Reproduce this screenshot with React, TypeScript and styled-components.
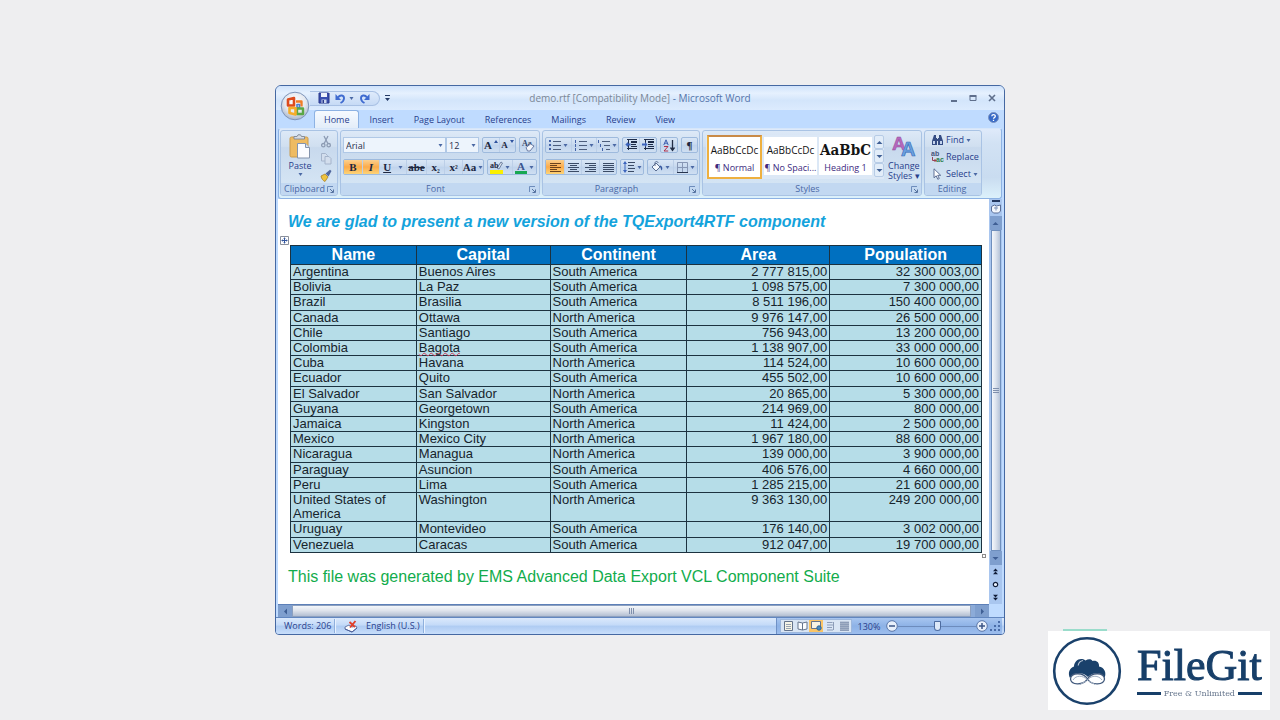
import React from 'react';
import styled, { createGlobalStyle, css } from 'styled-components';

const GlobalStyle = createGlobalStyle`
  * { box-sizing: border-box; }
  body { margin: 0; background: #eeeef0; font-family: "Open Sans", "Noto Sans", sans-serif; font-size: 9px; color: #28408c; }
  button, input, select { font: inherit; color: inherit; margin: 0; }
  button { padding: 0; border: 0; background: none; cursor: pointer; }
  h1, p { margin: 0; }
  svg { display: block; flex: none; }
`;

const Page = styled.main`
  min-height: 100vh;
  display: flex;
  align-items: center;
  justify-content: center;
  padding: 24px;
`;

const Window = styled.section`
  position: relative;
  width: 100%;
  max-width: 730px;
  border: 1px solid #4568a2;
  border-radius: 6px 6px 4px 4px;
  background: #bfdbff;
  overflow: hidden;
`;

/* ---------- title bar ---------- */

const TitleBar = styled.header`
  display: grid;
  grid-template-columns: 1fr auto 1fr;
  align-items: center;
  height: 24px;
  padding: 0 6px;
  background: linear-gradient(#cfe2fb, #e6f1fe 30%, #d3e5fb 60%, #dcebfe);
`;

const QuickAccess = styled.div`
  display: flex;
  align-items: center;
  padding-left: 28px;
`;

const QuickPill = styled.div`
  display: flex;
  align-items: center;
  gap: 3px;
  width: 70px;
  height: 15px;
  padding-left: 7px;
  border: 1px solid #a9c1e4;
  border-left: 0;
  border-radius: 0 8px 8px 0;
  background: linear-gradient(#dfebfb, #c6daf5);
`;

const Title = styled.h1`
  font-size: 10px;
  line-height: 14px;
  font-weight: 400;
  color: #7b8796;
  white-space: nowrap;
  span { color: #5474aa; }
`;

const WindowControls = styled.div`
  display: flex;
  justify-content: flex-end;
  gap: 7px;
`;

const IconButton = styled.button`
  display: flex;
  align-items: center;
  justify-content: center;
  flex: none;
  width: ${(p: { $w?: number }) => (p.$w || 12) + 'px'};
  height: 14px;
`;

const OfficeButton = styled.button`
  position: absolute;
  left: 4px;
  top: 5px;
  z-index: 2;
  width: 30px;
  height: 30px;
`;

/* ---------- tabs ---------- */

const TabRow = styled.nav`
  display: flex;
  align-items: stretch;
  height: 18px;
  padding: 0 4px 0 38px;
`;

const Tab = styled.button<{ $active?: boolean }>`
  padding: 0 9px;
  line-height: 18px;
  border: 1px solid transparent;
  border-bottom: 0;
  white-space: nowrap;
  ${(p) => p.$active && css`
    border-color: #8db2e3;
    border-radius: 3px 3px 0 0;
    background: linear-gradient(#f6faff, #e3edf9);
  `}
`;

const Spacer = styled.div`
  flex: 1;
`;

/* ---------- ribbon ---------- */

const Ribbon = styled.div`
  display: flex;
  gap: 2px;
  margin: 0 2px;
  padding: 1px 1px 2px;
  border: 1px solid #8db2e3;
  border-top-color: #d6e6fa;
  border-radius: 3px;
  background: linear-gradient(#dfeafa, #d2e2f4 20%, #c9dcf0 70%, #dcf1fb);
`;

const Group = styled.section<{ $w: number }>`
  display: flex;
  flex-direction: column;
  flex: none;
  width: ${(p) => p.$w}px;
  height: 66px;
  border: 1px solid #a9c3e4;
  border-radius: 3px;
  background: linear-gradient(#dde9f7, #d0dff0 24%, #c8d9ed 26%, #d8e8f6);
  overflow: hidden;
`;

const GroupBody = styled.div`
  flex: 1;
  display: flex;
  flex-direction: column;
  gap: 6px;
  padding: 6px 1px 0 2px;
`;

const GroupLabel = styled.footer`
  display: flex;
  align-items: center;
  justify-content: center;
  height: 12px;
  padding: 0 3px 0 1px;
  color: #4a68a6;
  line-height: 12px;
  background: #c2d8f1;
  span { flex: 1; text-align: center; }
`;

const Row = styled.div<{ $gap?: number }>`
  display: flex;
  gap: ${(p) => p.$gap ?? 3}px;
`;

const ToolSet = styled.div`
  display: flex;
  height: 16px;
  border: 1px solid #9ebadd;
  border-radius: 2px;
  background: linear-gradient(#d9e6f6, #c9daef 45%, #bfd3ec 50%, #cfdff2);
`;

const Tool = styled.button<{ $w: number; $on?: boolean }>`
  display: flex;
  align-items: center;
  justify-content: center;
  gap: 2px;
  width: ${(p) => p.$w}px;
  height: 14px;
  color: #1c2740;
  font: bold 11px/14px "Liberation Serif", serif;
  & + & { border-left: 1px solid #bccfe8; }
  ${(p) => p.$on && css`
    background: linear-gradient(#fbd08e, #fbab4b 50%, #fdd478);
  `}
`;

const SelectBox = styled.label<{ $w: number }>`
  position: relative;
  width: ${(p) => p.$w}px;
  height: 16px;
  select {
    appearance: none;
    width: 100%;
    height: 100%;
    padding: 0 2px;
    border: 1px solid #b0c8e6;
    border-radius: 0;
    background: #edf4fc;
    color: #28304c;
  }
  svg { position: absolute; right: 3px; top: 7px; pointer-events: none; }
`;

const ClipBody = styled.div`
  flex: 1;
  display: flex;
  justify-content: space-between;
  padding: 3px 5px 0 3px;
`;

const BigButton = styled.button`
  display: flex;
  flex-direction: column;
  align-items: center;
  width: 32px;
  line-height: 10px;
  gap: 2px;
`;

const SmallColumn = styled.div`
  display: flex;
  flex-direction: column;
  gap: 3px;
`;

const StylesBody = styled.div`
  flex: 1;
  display: flex;
  align-items: flex-start;
  gap: 4px;
  padding: 4px 2px 0 3px;
`;

const Gallery = styled.div`
  display: flex;
  gap: 2px;
  height: 44px;
  padding-left: 1px;
  background: #dce8f6;
`;

const StyleCard = styled.button<{ $on?: boolean }>`
  display: flex;
  flex-direction: column;
  justify-content: space-between;
  width: ${(p) => (p.$on ? 55 : 53)}px;
  height: ${(p) => (p.$on ? 44 : 38)}px;
  margin-top: ${(p) => (p.$on ? 0 : 2)}px;
  padding: 4px 0 1px;
  overflow: hidden;
  background: #ffffff;
  color: #3d2a80;
  line-height: 12px;
  white-space: nowrap;
  ${(p) => p.$on && css`
    padding: 4px 0 3px;
    border: 2px solid #eeb040;
    border-top-color: #c98a48;
  `}
  span { width: 100%; }
`;

const Sample = styled.span<{ $serif?: boolean }>`
  height: 18px;
  text-align: center;
  font: ${(p) => (p.$serif ? 'bold 15px/18px "DejaVu Serif Condensed", "DejaVu Serif", serif' : '10px/18px "Open Sans", sans-serif')};
  color: #141414;
`;

const GalleryArrows = styled.div`
  display: flex;
  flex-direction: column;
  button { height: 14px; border: 1px solid #b7cce6; border-radius: 2px; background: #e2edf9; }
`;

const EditBody = styled.div`
  flex: 1;
  display: flex;
  flex-direction: column;
  gap: 5px;
  padding: 3px 0 0 6px;
`;

const EditButton = styled.button`
  display: flex;
  align-items: center;
  gap: 2px;
  height: 12px;
  line-height: 12px;
`;

/* ---------- document ---------- */

const Workspace = styled.div`
  display: flex;
  margin: 0 2px;
`;

const Paper = styled.article`
  flex: 1;
  min-width: 0;
  min-height: 405px;
  padding: 13px 7px 0 10px;
  background: #ffffff;
  font-family: "Liberation Sans", Arial, sans-serif;
`;

const Headline = styled.p`
  font-size: 16px;
  line-height: 20px;
  font-weight: 700;
  font-style: italic;
  color: #14a3dc;
`;

const TableFrame = styled.div`
  position: relative;
  margin: 13px 0 0 2px;
`;

const MoveHandle = styled.button`
  position: absolute;
  left: -10px;
  top: -9px;
  width: 9px;
  height: 9px;
`;

const ResizeHandle = styled.span`
  position: absolute;
  right: -4px;
  bottom: -5px;
  width: 4px;
  height: 4px;
  border: 1px solid #8c8c8c;
  background: #ffffff;
`;

const DataTable = styled.table`
  width: 100%;
  height: 308px;
  table-layout: fixed;
  border-collapse: collapse;
  background: #b6dde8;
  color: #17242c;
  font-size: 13px;
  line-height: 14px;
  th, td { border: 1px solid #1c3240; padding: 0 2px; vertical-align: top; }
  th { background: #0070c0; color: #ffffff; font-size: 16px; line-height: 18px; }
  td { text-align: left; }
`;

const NumberCell = styled.td`
  && { text-align: right; }
`;

const Misspelt = styled.span`
  text-decoration: underline wavy #d0405c 1px;
  text-decoration-skip-ink: none;
  text-underline-offset: 0;
`;

const Footnote = styled.p`
  margin-top: 14px;
  font-size: 16px;
  line-height: 20px;
  color: #12ac4c;
`;

const VScroll = styled.aside`
  display: flex;
  flex-direction: column;
  align-items: center;
  width: 13px;
  background: #a9c6ef;
`;

const ScrollButton = styled.button`
  display: flex;
  align-items: center;
  justify-content: center;
  flex: none;
  width: ${(p: { $wide?: boolean }) => (p.$wide ? 14 : 12)}px;
  height: ${(p: { $wide?: boolean }) => (p.$wide ? 12 : 14)}px;
  background: #7f9fce;
`;

const VThumb = styled.div`
  display: flex;
  align-items: center;
  justify-content: center;
  flex: 1;
  width: 10px;
  border: 1px solid #6f8fbd;
  background: linear-gradient(90deg, #f4f7fb, #dde4ee 45%, #b5c3d8);
`;

const PageJump = styled.div`
  display: flex;
  flex-direction: column;
  button { height: 13px; }
`;

const HScroll = styled.div`
  display: flex;
  height: 13px;
  margin: 0 15px 0 2px;
  border-top: 1px solid #5d80b8;
  background: #8cabd8;
`;

const HThumb = styled.div`
  display: flex;
  align-items: center;
  justify-content: center;
  flex: 1;
  margin-right: 4px;
  border: 1px solid #8ca0bf;
  background: linear-gradient(#f4f7fb, #dfe4ec 45%, #b3bfd2);
`;

/* ---------- status bar ---------- */

const StatusBar = styled.footer`
  display: flex;
  align-items: center;
  height: 17px;
  padding: 0 2px 0 8px;
  border-top: 1px solid #6287c0;
  background: linear-gradient(#dbe9fc, #c3daf8 45%, #aecbf2 50%, #c8defb);
`;

const StatusItem = styled.span<{ $w: number }>`
  width: ${(p) => p.$w}px;
  line-height: 14px;
  white-space: nowrap;
`;

const Divider = styled.i`
  width: 2px;
  height: 14px;
  border-left: 1px solid #8fb0dd;
  border-right: 1px solid #e8f2ff;
`;

const StatusRight = styled.div`
  display: flex;
  align-items: center;
  height: 16px;
  padding-left: 3px;
  border-left: 1px solid #6f91c6;
  background: linear-gradient(#a8c6f0, #8db2e6 50%, #9dbeee);
`;

const ViewButtons = styled.div`
  display: flex;
  border: 1px solid #9db7dc;
  background: #d9e5f4;
`;

const ViewButton = styled.button<{ $on?: boolean }>`
  display: flex;
  align-items: center;
  justify-content: center;
  width: 14px;
  height: 12px;
  background: ${(p) => (p.$on ? '#fbc566' : 'transparent')};
`;

const ZoomRange = styled.input`
  appearance: none;
  width: 78px;
  height: 13px;
  background: linear-gradient(#6d8cbd, #6d8cbd) center / 100% 1px no-repeat;
  &::-webkit-slider-thumb {
    appearance: none;
    width: 7px;
    height: 10px;
    border: 1px solid #4d6ca0;
    border-radius: 1px 1px 4px 4px;
    background: #dce8f8;
  }
`;

const ZoomText = styled.span`
  width: 34px;
  text-align: center;
`;

/* ---------- brand badge ---------- */

const Brand = styled.a`
  position: fixed;
  right: 10px;
  bottom: 10px;
  display: flex;
  align-items: center;
  gap: 15px;
  width: 222px;
  height: 79px;
  padding-left: 4px;
  background: #ffffff;
  color: #173f69;
  text-decoration: none;
  &::before {
    content: "";
    position: absolute;
    left: 15px;
    top: -2px;
    width: 44px;
    height: 2px;
    background: #9adccb;
  }
`;

const BrandText = styled.div`
  display: flex;
  flex-direction: column;
  font-family: "Liberation Serif", serif;
`;

const BrandName = styled.strong`
  font-size: 44px;
  line-height: 46px;
  font-weight: 400;
  -webkit-text-stroke: 1px #173f69;
`;

const BrandLine = styled.span`
  display: flex;
  align-items: center;
  gap: 3px;
  font: 8px/10px "DejaVu Serif", serif;
  color: #65758c;
  white-space: nowrap;
  &::before, &::after { content: ""; flex: 1; height: 3px; background: #173f69; }
`;

/* ---------- icons ---------- */

const Caret = ({ color = '#4a68a4' }: { color?: string }) => (
  <svg width="5" height="3" viewBox="0 0 5 3"><path d="M0.5 0h4L2.5 3z" fill={color} /></svg>
);

const Chevron = ({ turn = 0 }: { turn?: number }) => (
  <svg width="7" height="7" viewBox="0 0 7 7"><path d="M0.5 5h6L3.5 2z" fill="#3f5f94" transform={`rotate(${turn} 3.5 3.5)`} /></svg>
);

const Launcher = () => (
  <svg width="7" height="7" viewBox="0 0 7 7" fill="none" stroke="#6e8dbc"><path d="M.5 6V.5H6" /><path d="M3 3l3 3M6.5 3.5v3h-3" stroke="#55729f" /></svg>
);

const OfficeOrb = () => (
  <svg width="30" height="30" viewBox="0 0 30 30">
    <defs>
      <radialGradient id="orb" cx=".5" cy=".35" r=".65">
        <stop offset="0" stopColor="#ffffff" /><stop offset=".6" stopColor="#e3e7ee" /><stop offset="1" stopColor="#a9b6cb" />
      </radialGradient>
    </defs>
    <circle cx="15" cy="15" r="13.8" fill="url(#orb)" stroke="#7c93b8" />
    <g fill="none" strokeLinejoin="round">
      <path d="M8 8.500l6-1.500v7.500H8z" stroke="#dd4b1c" strokeWidth="2.600" />
      <path d="M16 10.500h5.500v5" stroke="#f07d26" strokeWidth="2.400" />
      <path d="M17 13.500h2.500v3h-2.500z" stroke="#4b7fd0" strokeWidth="1.600" />
      <path d="M17 17.500h6v5.500h-6z" stroke="#5aa746" strokeWidth="2.400" />
      <path d="M9.500 17v5l6 1.500V17z" stroke="#f5ac2a" strokeWidth="2.600" />
    </g>
  </svg>
);

const SaveIcon = () => (
  <svg width="12" height="12" viewBox="0 0 12 12"><path d="M1 1h9.500l.5.500V11H1z" fill="#3a4fae" stroke="#27378a" /><path d="M3 1h6v4H3z" fill="#eef3fb" /><path d="M3.500 7.500h5V11h-5z" fill="#c9d5ec" /><path d="M4.500 8h1.500v3H4.500z" fill="#27378a" /></svg>
);

const UndoIcon = ({ flip = false }: { flip?: boolean }) => (
  <svg width="11" height="11" viewBox="0 0 11 11"><g transform={flip ? 'matrix(-1 0 0 1 11 0)' : undefined}>
    <path d="M3 4.500C5 1.500 9.200 2 9 5.500 8.900 7.500 7.500 9 5.500 10" fill="none" stroke="#3f6bd0" strokeWidth="1.900" /><path d="M.5 1v6h5.500z" fill="#3f6bd0" /></g></svg>
);

const PasteIcon = () => (
  <svg width="22" height="25" viewBox="0 0 22 25">
    <rect x="1" y="3" width="18" height="20" rx="1.500" fill="#eebb62" stroke="#c99a4c" />
    <path d="M5 5V2.500h3L9 .8h2.500l1 1.700h3V5z" fill="#d7dbe2" stroke="#7c8796" strokeWidth=".9" />
    <path d="M8.500 9.500h8l4 4v10.500h-12z" fill="#fbfcff" stroke="#8494ad" />
    <path d="M16.500 9.500v4h4" fill="#d8e0ee" stroke="#8494ad" />
  </svg>
);

const CutIcon = () => (
  <svg width="12" height="13" viewBox="0 0 12 13" fill="none" stroke="#8c9bb3" strokeWidth="1.300"><path d="M4 1l3.800 7.500M8 1L4.200 8.500" /><circle cx="3.300" cy="10.200" r="1.700" /><circle cx="8.700" cy="10.200" r="1.700" /></svg>
);
const CopyIcon = () => (
  <svg width="12" height="13" viewBox="0 0 12 13" fill="#d3deed" stroke="#a5b4cb"><path d="M1.500 1.500h4l2 2V9h-6z" /><path d="M5 4.500h4l2 2V12H5z" /></svg>
);
const BrushIcon = () => (
  <svg width="12" height="13" viewBox="0 0 12 13"><path d="M1 7l4-2 3 3-3 4.500C3 11.500 1.500 10 1 7z" fill="#efc33c" stroke="#a9822a" strokeWidth=".8" /><path d="M5.500 4.500l3 3L11.500 2 10 .8z" fill="#50679e" /></svg>
);

const bars = (color: string, widths: number[], x: number[]) =>
  widths.map((w, i) => <rect key={i} x={x[i]} y={1 + i * 2} width={w} height="1" fill={color} />);

const AlignIcon = ({ kind }: { kind: 'left' | 'center' | 'right' | 'full' }) => {
  const w = kind === 'full' ? [11, 11, 11, 11, 11] : [11, 7, 11, 7, 11];
  const off = kind === 'center' ? 2 : kind === 'right' ? 4 : 0;
  return <svg width="11" height="11" viewBox="0 0 11 11">{bars(kind === 'left' ? '#6b431d' : '#3b4b66', w, [0, off, 0, off, 0])}</svg>;
};

const ListIcon = ({ kind }: { kind: 'dots' | 'numbers' | 'levels' }) => (
  <svg width="12" height="12" viewBox="0 0 12 12" fill="#4463a8">
    {[1, 5, 9].map((y, i) => {
      const x = kind === 'levels' ? i * 2 : 0;
      return <g key={y}><rect x={x} y={y} width={kind === 'dots' ? 2 : 1} height={kind === 'dots' ? 2 : 3} /><rect x={x + 4} y={y + 1} width={8 - x} height="1" fill="#4c5d7c" /></g>;
    })}
  </svg>
);

const IndentIcon = ({ turn = false }: { turn?: boolean }) => (
  <svg width="12" height="12" viewBox="0 0 12 12">
    <g fill="#1e2c48"><rect x="2" y="0" width="10" height="1" /><rect x="6" y="2" width="6" height="2" /><rect x="6" y="5" width="5" height="1" /><rect x="6" y="7" width="6" height="1" /><rect x="2" y="9" width="10" height="1" /><rect x="3" y="1" width="1" height="10" /></g>
    <path d={turn ? 'M0 4.500h3V3l2.500 2.500L3 8V6.500H0z' : 'M5.500 4.500H3V3L.3 5.500 3 8V6.500h2.500z'} fill="#3c64bd" />
  </svg>
);

const SortIcon = () => (
  <svg width="13" height="13" viewBox="0 0 13 13" fill="none"><path d="M.8 6L3 .8 5.200 6M1.600 4.200h2.800" stroke="#3a5cae" /><path d="M1 7.500h4L1 12h4.200" stroke="#b0304a" /><path d="M9.500 1v10M7.500 8.500l2 2.800 2-2.800" stroke="#222d45" strokeWidth="1.300" /></svg>
);

const SpacingIcon = () => (
  <svg width="12" height="12" viewBox="0 0 12 12"><path d="M2 0L4 3H0zM2 12l2-3H0z" fill="#3c64bd" /><path d="M2 3v6" stroke="#3c64bd" /><g fill="#3b4b66"><rect x="5" y="1" width="7" height="1" /><rect x="5" y="4" width="6" height="1" /><rect x="5" y="7" width="7" height="1" /><rect x="5" y="10" width="6" height="1" /></g></svg>
);

const BucketIcon = () => (
  <svg width="12" height="12" viewBox="0 0 12 12"><path d="M1 6l4-4 4 4-4 4z" fill="#f4f8fd" stroke="#5a6d91" /><path d="M4 5V2c0-2 3-2 3 0" fill="none" stroke="#5a6d91" /><path d="M9 4.500c2.500.5 2.800 3 1.800 5C9.500 8 10 6.500 8.500 5.500z" fill="#34569e" /></svg>
);

const BorderIcon = () => (
  <svg width="11" height="11" viewBox="0 0 11 11" fill="none"><path d="M.5 10V.5h10V10M5.500 1v9M1 5.500h9" stroke="#8797b5" /><path d="M0 10.500h11" stroke="#26344e" /></svg>
);

const HighlightIcon = () => (
  <svg width="13" height="13" viewBox="0 0 13 13"><path d="M7 7l4-6 1.500 1L9 8z" fill="#dfe6f0" stroke="#56688c" strokeWidth=".8" /><rect x="0" y="9" width="13" height="4" fill="#fbf000" /><text x="0" y="7" fontSize="8" fontWeight="700" fill="#1c2740" fontFamily="Liberation Serif, serif">ab</text></svg>
);

const FontColorIcon = () => (
  <svg width="12" height="13" viewBox="0 0 12 13"><text x="6" y="9" textAnchor="middle" fontSize="11" fontWeight="700" fill="#3a5590" fontFamily="Liberation Serif, serif">A</text><rect y="10" width="12" height="3" fill="#17a852" /></svg>
);

const SizeMark = ({ down = false }: { down?: boolean }) => (
  <svg width="4" height="10" viewBox="0 0 4 10"><path d={down ? 'M0 0h4L2 3z' : 'M0 3h4L2 0z'} fill="#2f539f" /></svg>
);

const SmallCap = styled.span`
  font-size: 9px;
`;

const ClearIcon = () => (
  <svg width="14" height="13" viewBox="0 0 14 13"><text x="1" y="7" fontSize="8" fontWeight="700" fill="#34456a" fontFamily="Liberation Serif, serif">Aa</text><path d="M5 8.500L9.500 5l3.500 2-4 5H6.500z" fill="#f4f7fc" stroke="#6a7ba3" /></svg>
);

const StylesIcon = () => (
  <svg width="26" height="24" viewBox="0 0 26 24" overflow="visible" fontFamily="Liberation Sans, sans-serif" fontWeight="700"><text x="1" y="15" fontSize="19" fill="#b768bd" stroke="#8d4c9c" strokeWidth=".5">A</text><text x="10" y="21" fontSize="20" fill="#6ba2e0" stroke="#3b6db8" strokeWidth=".7">A</text></svg>
);

const FindIcon = () => (
  <svg width="13" height="11" viewBox="0 0 13 11" fill="#344c84"><path d="M3 0h2v3h1v7H1V6z" /><path d="M8 0h2l2 6v4H7V3h1z" /><path d="M5 4h3v2H5z" /><path d="M2 6h2v3H2zM9 6h2v3H9z" fill="#c4d4ee" /></svg>
);
const ReplaceIcon = () => (
  <svg width="13" height="12" viewBox="0 0 13 12" fontFamily="Liberation Sans, sans-serif" fontSize="7" fontWeight="700"><text x="0" y="5" fill="#46557c">ab</text><text x="5" y="11" fill="#2b7c4c">ac</text><path d="M1.500 6v3.500H5M3.500 8L5 9.500 3.500 11" fill="none" stroke="#9b4053" /></svg>
);
const SelectIcon = () => (
  <svg width="13" height="12" viewBox="0 0 13 12"><path d="M3 .8v9l2.200-2 1.600 3.500 1.500-.8-1.600-3.200h3z" fill="#fff" stroke="#50628b" strokeWidth=".9" /></svg>
);

const HelpIcon = () => (
  <svg width="11" height="11" viewBox="0 0 11 11"><circle cx="5.500" cy="5.500" r="5" fill="#3569c8" stroke="#7c93c0" /><path d="M3.800 4.300C3.800 2 7.300 2 7.300 4.200 7.300 5.500 5.600 5.400 5.500 6.800M5.500 7.800v1.200" fill="none" stroke="#fff" strokeWidth="1.300" /></svg>
);

const ProofIcon = () => (
  <svg width="14" height="13" viewBox="0 0 14 13"><path d="M1 7l4-2 3 2 4-1 1 2-5 4L1 9z" fill="#fbfcff" stroke="#6577a5" /><path d="M1 9l7 3 5-4" fill="none" stroke="#4b609a" /><path d="M5.500 2l5.500 5M11.500 1L6 7.500" stroke="#e0402c" strokeWidth="1.900" /></svg>
);

const ViewIcon = ({ kind }: { kind: number }) => (
  <svg width="11" height="10" viewBox="0 0 11 10" fill="none" stroke={kind > 2 ? '#8d9db8' : '#65748c'}>
    {kind === 0 && <><path d="M1.500.5h8v9h-8z" fill="#f6f4e6" /><path d="M3 3.500h5M3 5.500h5M3 7.500h5" stroke="#9aa4b2" /></>}
    {kind === 1 && <path d="M5.500 2v7M5.500 2L1 1v7l4.500 1L10 8V1z" fill="#fafcff" />}
    {kind === 2 && <><path d="M.5.500h9v7h-9z" fill="#f8f3e2" /><circle cx="8" cy="7" r="2.200" fill="#4a8bbd" stroke="#2f6596" /></>}
    {kind === 3 && <path d="M2 1.500h5.500M2 4h6M2 6.500h5M2 9h6M8.500 1v8" />}
    {kind === 4 && <><path d="M1 .5h9v9H1z" fill="#a3b0c6" stroke="none" /><path d="M1 1.500h9M1 3.500h9M1 5.500h9M1 7.500h9M1 9.500h9" /></>}
  </svg>
);

const ZoomSign = ({ plus = false }: { plus?: boolean }) => (
  <svg width="12" height="12" viewBox="0 0 12 12" fill="none"><circle cx="6" cy="6" r="5.300" fill="#e8f0fb" stroke="#5b77a8" /><path d={plus ? 'M3 6h6M6 3v6' : 'M3 6h6'} stroke="#3d5686" strokeWidth="1.500" /></svg>
);

const PageJumpIcon = ({ kind }: { kind: 'up' | 'dot' | 'down' }) => (
  <svg width="7" height="7" viewBox="0 0 7 7">
    {kind === 'dot'
      ? <circle cx="3.500" cy="3.500" r="2.200" fill="#e9f1fc" stroke="#101c38" strokeWidth="1.200" />
      : <path d="M1 3.200h5L3.500.5zM1 6.200h5L3.500 3.500z" fill="#101c38" transform={kind === 'down' ? 'rotate(180 3.500 3.500)' : undefined} />}
  </svg>
);

const CloudLogo = () => (
  <svg width="70" height="70" viewBox="0 0 70 70" fill="none">
    <circle cx="35" cy="35" r="32.800" fill="#fff" stroke="#1a416b" strokeWidth="2.600" />
    <path d="M18 42c-2.500-5-.5-10 4-11.500C22 25 28 20.500 33.500 24.500c3-2 6-1.500 7 .5 4-1 7 1.500 6.500 5.500 5 .5 8 6 5.500 11.500-2-5-10-7-16.500-1-6-6-15-4-18 1z" fill="#1a416b" />
    <path d="M31 24.500c-2.500.5-4.500 2.500-4.800 5" stroke="#b8c5d5" strokeWidth="1.200" />
    <path d="M35.500 43c-4-7-16.500-7-17 0 .5 6 12 7 17 0 4.500 7 16.500 6 17 0-.5-7-13-7-17 0z" fill="#fff" stroke="#41597c" strokeWidth="1.300" />
    <path d="M21 44c3-5 10-5 14.500 0 4-5 11-5 14.500 0M28 48.500l6-3.500M43 48.500L37 45" stroke="#a3b0c3" />
  </svg>
);

/* ---------- data ---------- */

const COLUMNS: { name: string; share: number }[] = [
  { name: 'Name', share: 126 },
  { name: 'Capital', share: 134 },
  { name: 'Continent', share: 137 },
  { name: 'Area', share: 143 },
  { name: 'Population', share: 152 },
];
const TOTAL_SHARE = COLUMNS.reduce((sum, c) => sum + c.share, 0);

const ROWS = [
  ['Argentina', 'Buenos Aires', 'South America', '2 777 815,00', '32 300 003,00'],
  ['Bolivia', 'La Paz', 'South America', '1 098 575,00', '7 300 000,00'],
  ['Brazil', 'Brasilia', 'South America', '8 511 196,00', '150 400 000,00'],
  ['Canada', 'Ottawa', 'North America', '9 976 147,00', '26 500 000,00'],
  ['Chile', 'Santiago', 'South America', '756 943,00', '13 200 000,00'],
  ['Colombia', 'Bagota', 'South America', '1 138 907,00', '33 000 000,00'],
  ['Cuba', 'Havana', 'North America', '114 524,00', '10 600 000,00'],
  ['Ecuador', 'Quito', 'South America', '455 502,00', '10 600 000,00'],
  ['El Salvador', 'San Salvador', 'North America', '20 865,00', '5 300 000,00'],
  ['Guyana', 'Georgetown', 'South America', '214 969,00', '800 000,00'],
  ['Jamaica', 'Kingston', 'North America', '11 424,00', '2 500 000,00'],
  ['Mexico', 'Mexico City', 'North America', '1 967 180,00', '88 600 000,00'],
  ['Nicaragua', 'Managua', 'North America', '139 000,00', '3 900 000,00'],
  ['Paraguay', 'Asuncion', 'South America', '406 576,00', '4 660 000,00'],
  ['Peru', 'Lima', 'South America', '1 285 215,00', '21 600 000,00'],
  ['United States of America', 'Washington', 'North America', '9 363 130,00', '249 200 000,00'],
  ['Uruguay', 'Montevideo', 'South America', '176 140,00', '3 002 000,00'],
  ['Venezuela', 'Caracas', 'South America', '912 047,00', '19 700 000,00'],
];

const TABS = ['Home', 'Insert', 'Page Layout', 'References', 'Mailings', 'Review', 'View'];

/* ---------- ribbon groups ---------- */

const Label = ({ text, launcher = true }: { text: string; launcher?: boolean }) => (
  <GroupLabel><span>{text}</span>{launcher && <Launcher />}</GroupLabel>
);

const ClipboardGroup = () => (
  <Group $w={58}>
    <ClipBody>
      <BigButton><PasteIcon /><span>Paste</span><Caret /></BigButton>
      <SmallColumn>
        <IconButton aria-label="Cut"><CutIcon /></IconButton>
        <IconButton aria-label="Copy"><CopyIcon /></IconButton>
        <IconButton aria-label="Format Painter"><BrushIcon /></IconButton>
      </SmallColumn>
    </ClipBody>
    <Label text="Clipboard" />
  </Group>
);

const FontGroup = () => (
  <Group $w={200}>
    <GroupBody>
      <Row>
        <Row $gap={0}>
          <SelectBox $w={103}><select aria-label="Font"><option>Arial</option></select><Caret /></SelectBox>
          <SelectBox $w={33}><select aria-label="Font size"><option>12</option></select><Caret /></SelectBox>
        </Row>
        <ToolSet>
          <Tool $w={16} aria-label="Grow Font">A<SizeMark /></Tool>
          <Tool $w={16} aria-label="Shrink Font"><SmallCap>A</SmallCap><SizeMark down /></Tool>
        </ToolSet>
        <ToolSet><Tool $w={16} aria-label="Clear Formatting"><ClearIcon /></Tool></ToolSet>
      </Row>
      <Row>
        <ToolSet>
          <Tool $w={18} $on>B</Tool>
          <Tool $w={17} $on><i>I</i></Tool>
          <Tool $w={27}><u>U</u>&nbsp;<Caret /></Tool>
          <Tool $w={20}><s>abe</s></Tool>
          <Tool $w={18}><span>x<small>₂</small></span></Tool>
          <Tool $w={18}><span>x<small>²</small></span></Tool>
          <Tool $w={21}>Aa<Caret /></Tool>
        </ToolSet>
        <ToolSet>
          <Tool $w={24} aria-label="Highlight"><HighlightIcon /><Caret /></Tool>
          <Tool $w={24} aria-label="Font Color"><FontColorIcon /><Caret /></Tool>
        </ToolSet>
      </Row>
    </GroupBody>
    <Label text="Font" />
  </Group>
);

const ParagraphGroup = () => (
  <Group $w={158}>
    <GroupBody>
      <Row>
        <ToolSet>
          <Tool $w={25} aria-label="Bullets"><ListIcon kind="dots" /><Caret /></Tool>
          <Tool $w={25} aria-label="Numbering"><ListIcon kind="numbers" /><Caret /></Tool>
          <Tool $w={22} aria-label="Multilevel List"><ListIcon kind="levels" /><Caret /></Tool>
        </ToolSet>
        <ToolSet>
          <Tool $w={16} aria-label="Decrease Indent"><IndentIcon /></Tool>
          <Tool $w={17} aria-label="Increase Indent"><IndentIcon turn /></Tool>
        </ToolSet>
        <ToolSet><Tool $w={16} aria-label="Sort"><SortIcon /></Tool></ToolSet>
        <ToolSet><Tool $w={15}>¶</Tool></ToolSet>
      </Row>
      <Row>
        <ToolSet>
          <Tool $w={18} $on aria-label="Align Left"><AlignIcon kind="left" /></Tool>
          <Tool $w={17} aria-label="Center"><AlignIcon kind="center" /></Tool>
          <Tool $w={18} aria-label="Align Right"><AlignIcon kind="right" /></Tool>
          <Tool $w={17} aria-label="Justify"><AlignIcon kind="full" /></Tool>
        </ToolSet>
        <ToolSet><Tool $w={22} aria-label="Line Spacing"><SpacingIcon /><Caret /></Tool></ToolSet>
        <ToolSet>
          <Tool $w={25} aria-label="Shading"><BucketIcon /><Caret /></Tool>
          <Tool $w={24} aria-label="Borders"><BorderIcon /><Caret /></Tool>
        </ToolSet>
      </Row>
    </GroupBody>
    <Label text="Paragraph" />
  </Group>
);

const StylesGroup = () => (
  <Group $w={220}>
    <StylesBody>
      <Gallery>
        <StyleCard $on><Sample>AaBbCcDc</Sample><span>¶ Normal</span></StyleCard>
        <StyleCard><Sample>AaBbCcDc</Sample><span>¶ No Spaci...</span></StyleCard>
        <StyleCard><Sample $serif>AaBbC</Sample><span>Heading 1</span></StyleCard>
        <GalleryArrows>
          <IconButton $w={10} aria-label="Previous styles"><Chevron /></IconButton>
          <IconButton $w={10} aria-label="Next styles"><Chevron turn={180} /></IconButton>
          <IconButton $w={10} aria-label="More styles"><Chevron turn={180} /></IconButton>
        </GalleryArrows>
      </Gallery>
      <BigButton><StylesIcon /><span>Change Styles&nbsp;▾</span></BigButton>
    </StylesBody>
    <Label text="Styles" />
  </Group>
);

const EditingGroup = () => (
  <Group $w={58}>
    <EditBody>
      <EditButton><FindIcon />Find <Caret /></EditButton>
      <EditButton><ReplaceIcon />Replace</EditButton>
      <EditButton><SelectIcon />Select <Caret /></EditButton>
    </EditBody>
    <Label text="Editing" launcher={false} />
  </Group>
);

export default function App() {
  return (
    <>
      <GlobalStyle />
      <Page>
        <Window>
          <OfficeButton aria-label="Office Button"><OfficeOrb /></OfficeButton>
          <TitleBar>
            <QuickAccess>
              <QuickPill>
                <IconButton $w={14} aria-label="Save"><SaveIcon /></IconButton>
                <IconButton aria-label="Undo"><UndoIcon /></IconButton>
                <Caret />
                <IconButton $w={14} aria-label="Redo"><UndoIcon flip /></IconButton>
              </QuickPill>
              <IconButton $w={14} aria-label="Customize Quick Access Toolbar">
                <svg width="5" height="6" viewBox="0 0 5 6" fill="#263b66"><path d="M0 0h5v1H0zM0 3h5L2.500 6z" /></svg>
              </IconButton>
            </QuickAccess>
            <Title>demo.rtf [Compatibility Mode] <span>- Microsoft Word</span></Title>
            <WindowControls>
              <IconButton aria-label="Minimize"><svg width="8" height="8" viewBox="0 0 8 8"><path d="M1 6h6v2H1z" fill="#5f6f8c" /></svg></IconButton>
              <IconButton aria-label="Maximize"><svg width="8" height="8" viewBox="0 0 8 8"><path d="M1 2.500h6v4H1z" fill="none" stroke="#5f6f8c" /><path d="M.5 1h7v2h-7z" fill="#5f6f8c" /></svg></IconButton>
              <IconButton aria-label="Close"><svg width="8" height="8" viewBox="0 0 8 8"><path d="M1 1l6 6M7 1L1 7" stroke="#5f6f8c" strokeWidth="1.600" /></svg></IconButton>
            </WindowControls>
          </TitleBar>
          <TabRow>
            {TABS.map((t, i) => <Tab key={t} $active={i === 0}>{t}</Tab>)}
            <Spacer />
            <IconButton $w={14} aria-label="Help"><HelpIcon /></IconButton>
          </TabRow>
          <Ribbon>
            <ClipboardGroup />
            <FontGroup />
            <ParagraphGroup />
            <StylesGroup />
            <EditingGroup />
          </Ribbon>
          <Workspace>
            <Paper>
              <Headline>We are glad to present a new version of the TQExport4RTF component</Headline>
              <TableFrame>
                <MoveHandle aria-label="Move table">
                  <svg width="9" height="9" viewBox="0 0 9 9" fill="none"><path d="M.5.500h8v8h-8z" fill="#fff" stroke="#8a8f9a" /><path d="M4.500 1.500v6M1.500 4.500h6" stroke="#31549c" /><path d="M3.500 2.500h2M3.500 6.500h2M2.500 3.500v2M6.500 3.500v2" stroke="#31549c" strokeWidth=".7" /></svg>
                </MoveHandle>
                <DataTable>
                  <colgroup>{COLUMNS.map((c) => <col key={c.name} width={`${(c.share / TOTAL_SHARE) * 100}%`} />)}</colgroup>
                  <thead><tr>{COLUMNS.map((c) => <th key={c.name} scope="col">{c.name}</th>)}</tr></thead>
                  <tbody>
                    {ROWS.map((r) => (
                      <tr key={r[0]}>
                        <td>{r[0]}</td>
                        <td>{r[1] === 'Bagota' ? <Misspelt>{r[1]}</Misspelt> : r[1]}</td>
                        <td>{r[2]}</td>
                        <NumberCell>{r[3]}</NumberCell>
                        <NumberCell>{r[4]}</NumberCell>
                      </tr>
                    ))}
                  </tbody>
                </DataTable>
                <ResizeHandle />
              </TableFrame>
              <Footnote>This file was generated by EMS Advanced Data Export VCL Component Suite</Footnote>
            </Paper>
            <VScroll>
              <svg width="12" height="17" viewBox="0 0 12 17" fill="none"><path d="M2 2h8" stroke="#22375f" strokeWidth="2" /><path d="M1.500 7.500l3-1.500 2 1 4-1v6l-2 2h-5l-2-2z" fill="#f3f7fd" stroke="#5b6f98" /><path d="M4 9h4M6 7.500v4" stroke="#7f93b8" /></svg>
              <ScrollButton aria-label="Scroll up"><Chevron /></ScrollButton>
              <VThumb><svg width="6" height="6" viewBox="0 0 6 6"><path d="M0 .5h6M0 2.500h6M0 4.500h6" stroke="#7f90ad" /></svg></VThumb>
              <ScrollButton aria-label="Scroll down"><Chevron turn={180} /></ScrollButton>
              <PageJump>
                <IconButton aria-label="Previous Page"><PageJumpIcon kind="up" /></IconButton>
                <IconButton aria-label="Select Browse Object"><PageJumpIcon kind="dot" /></IconButton>
                <IconButton aria-label="Next Page"><PageJumpIcon kind="down" /></IconButton>
              </PageJump>
            </VScroll>
          </Workspace>
          <HScroll>
            <ScrollButton $wide aria-label="Scroll left"><Chevron turn={-90} /></ScrollButton>
            <HThumb><svg width="6" height="6" viewBox="0 0 6 6"><path d="M.5 0v6M2.500 0v6M4.500 0v6" stroke="#7f90ad" /></svg></HThumb>
            <ScrollButton $wide aria-label="Scroll right"><Chevron turn={90} /></ScrollButton>
          </HScroll>
          <StatusBar>
            <StatusItem $w={50}>Words: 206</StatusItem>
            <Divider />
            <IconButton $w={30} aria-label="Proofing errors"><ProofIcon /></IconButton>
            <StatusItem $w={57}>English (U.S.)</StatusItem>
            <Divider />
            <Spacer />
            <StatusRight>
              <ViewButtons>
                {['Print Layout', 'Full Screen Reading', 'Web Layout', 'Outline', 'Draft'].map((v, i) => (
                  <ViewButton key={v} $on={i === 2} aria-label={v}><ViewIcon kind={i} /></ViewButton>
                ))}
              </ViewButtons>
              <ZoomText>130%</ZoomText>
              <IconButton aria-label="Zoom out"><ZoomSign /></IconButton>
              <ZoomRange type="range" aria-label="Zoom" min={0} max={100} defaultValue={50} />
              <IconButton aria-label="Zoom in"><ZoomSign plus /></IconButton>
              <svg width="14" height="12" viewBox="0 0 14 12" fill="#4a6ca8"><path d="M10 1h2v2h-2zM10 5h2v2h-2zM10 9h2v2h-2zM6 5h2v2H6zM6 9h2v2H6zM2 9h2v2H2z" /></svg>
            </StatusRight>
          </StatusBar>
        </Window>
      </Page>
      <Brand href="#" aria-label="FileGit">
        <CloudLogo />
        <BrandText>
          <BrandName>FileGit</BrandName>
          <BrandLine>Free &amp; Unlimited</BrandLine>
        </BrandText>
      </Brand>
    </>
  );
}
